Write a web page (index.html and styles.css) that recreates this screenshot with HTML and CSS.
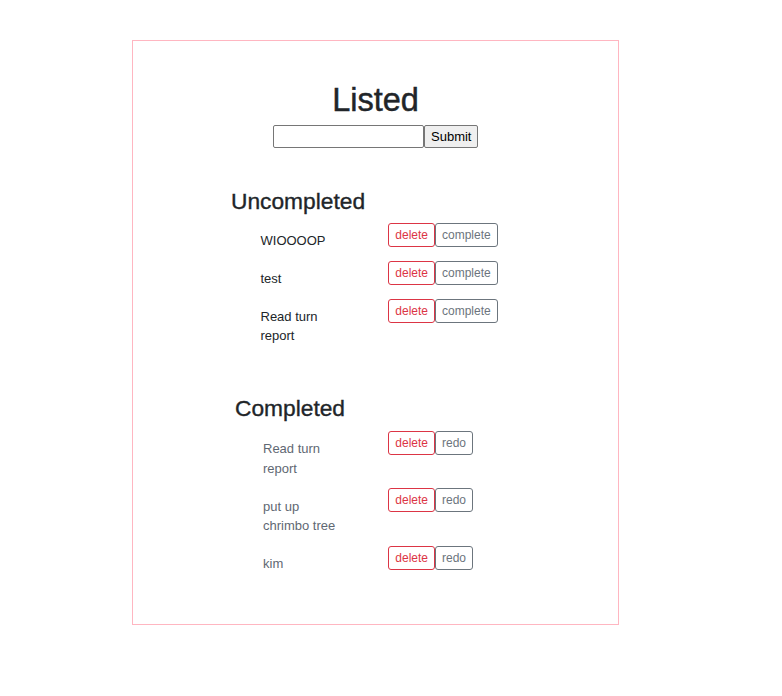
FILE: index.html
```html
<!DOCTYPE html>
<html lang="en">
<head>
<meta charset="utf-8">
<title>Listed</title>
<link rel="stylesheet" href="styles.css">
</head>
<body>
<main class="app">
  <header class="top">
    <h1 class="title">Listed</h1>
    <form class="add-form"><input class="add-input" type="text"><button class="add-submit" type="submit">Submit</button></form>
  </header>

  <section class="section section-open">
    <h4 class="section-title">Uncompleted</h4>
    <ul class="list">
      <li class="row"><span class="item-text">WIOOOOP</span><span class="actions"><button class="btn btn-danger">delete</button><button class="btn btn-secondary">complete</button></span></li>
      <li class="row"><span class="item-text">test</span><span class="actions"><button class="btn btn-danger">delete</button><button class="btn btn-secondary">complete</button></span></li>
      <li class="row"><span class="item-text">Read turn report</span><span class="actions"><button class="btn btn-danger">delete</button><button class="btn btn-secondary">complete</button></span></li>
    </ul>
  </section>

  <section class="section section-done">
    <h4 class="section-title">Completed</h4>
    <ul class="list">
      <li class="row"><span class="item-text">Read turn report</span><span class="actions"><button class="btn btn-danger">delete</button><button class="btn btn-secondary">redo</button></span></li>
      <li class="row"><span class="item-text">put up chrimbo tree</span><span class="actions"><button class="btn btn-danger">delete</button><button class="btn btn-secondary">redo</button></span></li>
      <li class="row"><span class="item-text">kim</span><span class="actions"><button class="btn btn-danger">delete</button><button class="btn btn-secondary">redo</button></span></li>
    </ul>
  </section>
</main>
</body>
</html>
```

FILE: styles.css
```css
html, body {
  margin: 0;
  padding: 0;
  background: #fff;
}

body {
  font-family: "Liberation Sans", Arial, sans-serif;
  color: #212529;
}

.app {
  box-sizing: border-box;
  width: 487px;
  margin: 40px 0 0 132px;
  border: 1px solid #ffb6c1;
  padding: 39.5px 0 40px;
}

.top {
  text-align: center;
}

.title {
  margin: 0 0 5.5px;
  font-size: 32.5px;
  font-weight: 500;
  line-height: 1.2;
  -webkit-text-stroke: 0.45px currentColor;
}

.add-form {
  display: flex;
  justify-content: center;
  margin: 0;
}

.add-input {
  box-sizing: border-box;
  width: 151px;
  height: 23px;
  margin: 0;
  padding: 1px 3px;
  border: 1px solid #767676;
  border-radius: 2px;
  font-family: "Liberation Sans", Arial, sans-serif;
  font-size: 13px;
  background: #fff;
}

.add-submit {
  box-sizing: border-box;
  width: 54px;
  height: 23px;
  margin: 0;
  padding: 0 6px;
  border: 1px solid #767676;
  border-radius: 2px;
  background: #efefef;
  color: #000;
  font-family: "Liberation Sans", Arial, sans-serif;
  font-size: 13px;
}

.section {
  margin-top: 39.5px;
}

.section-title {
  margin: 0 0 8.3px;
  font-size: 22.75px;
  font-weight: 500;
  line-height: 1.2;
  -webkit-text-stroke: 0.35px currentColor;
}

.list {
  display: flex;
  flex-direction: column;
  list-style: none;
  margin: 0;
  padding: 0;
}

.row {
  display: grid;
  align-items: start;
  font-size: 13px;
  line-height: 1.5;
}

.item-text {
  display: block;
  max-width: 80px;
}

.actions {
  display: flex;
}

.section-open {
  padding-left: 98px;
}

.section-open .list {
  padding-left: 29.5px;
}

.section-open .row {
  grid-template-columns: 127.8px auto;
  margin-bottom: 11px;
}

.section-open .item-text {
  padding-top: 7.5px;
}

.section-done {
  margin-top: 38.5px;
  padding-left: 102px;
}

.section-done .list {
  padding-left: 28px;
}

.section-done .row {
  grid-template-columns: 125.3px auto;
  margin-bottom: 10px;
  color: #5f6873;
}

.section-done .item-text {
  padding-top: 8.5px;
}

.btn {
  box-sizing: border-box;
  height: 24px;
  margin: 0;
  padding: 2px 6px;
  border: 1px solid;
  border-radius: 3px;
  background: #fff;
  font-family: "Liberation Sans", Arial, sans-serif;
  font-size: 12px;
  line-height: 1.5;
}

.btn-danger {
  color: #dc3545;
  border-color: #dc3545;
}

.btn-secondary {
  color: #6c757d;
  border-color: #6c757d;
}
```
